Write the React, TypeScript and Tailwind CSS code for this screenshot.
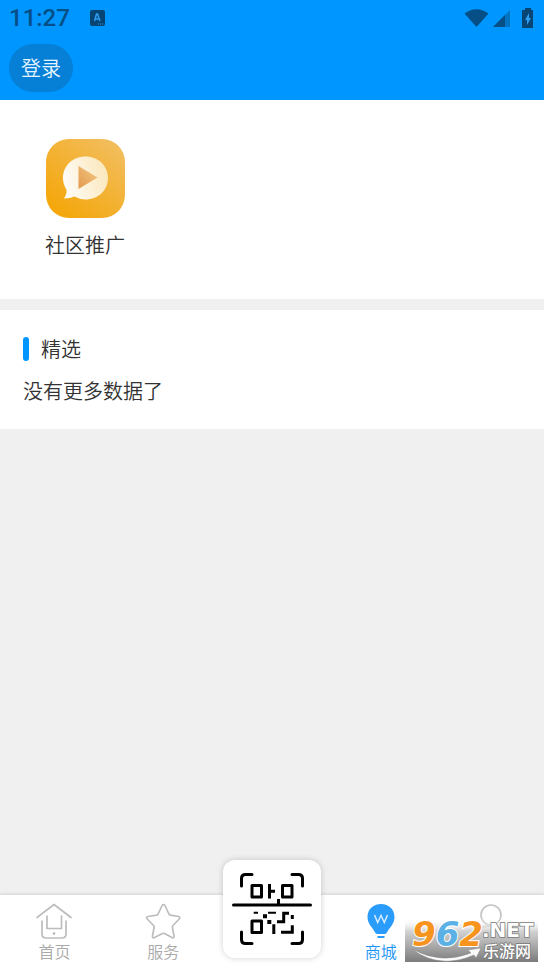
import type { ReactNode } from "react";

const TabItem = ({ label, active, children }: { label?: string; active?: boolean; children: ReactNode }) => (
  <a
    href="#"
    className={
      active
        ? "flex flex-1 flex-col items-center pt-2 text-base text-[#1c94f5]"
        : "flex flex-1 flex-col items-center pt-2 text-base text-[#a9a9a9]"
    }
  >
    {children}
    {label && <span className="leading-6">{label}</span>}
  </a>
);

const StatusBar = () => (
  <div className="flex h-9 items-center justify-between pl-[9px] pr-2 text-[#064f86]">
    <div className="flex items-center gap-5">
      <span className="font-[Roboto] text-2xl font-medium">11:27</span>
      <svg width="15" height="16" viewBox="0 0 15 16">
        <rect width="15" height="16" rx="2" fill="#064573" />
        <path d="M4.500 11 6.500 4h1l2.500 7M5.500 9h4" fill="none" stroke="#2d9df0" strokeWidth="1.500" />
        <path d="M8 14h5" stroke="#2d9df0" strokeDasharray="1 1" />
      </svg>
    </div>
    <div className="flex items-center gap-1">
      <svg width="25" height="18" viewBox="0 0 25 18">
        <path d="M0.500 4.500Q12.500 -4 24.500 4.500L12.500 18Z" fill="#064f86" />
      </svg>
      <svg width="17" height="17" viewBox="0 0 17 17">
        <path d="M17 0V17H0Z" fill="#0374c4" />
        <path d="M12 5V17H0Z" fill="#064f86" />
      </svg>
      <svg width="22" height="20" viewBox="0 0 22 20">
        <path d="M8 2h3V0h6v2h2v18H8Z" fill="#064573" />
        <path d="m15 5-4 7h2v5l4-7h-2Z" fill="#2d9df0" />
      </svg>
    </div>
  </div>
);

const PlayTile = () => (
  <svg width="79" height="79" viewBox="0 0 79 79">
    <defs>
      <linearGradient id="tile" x1="0" y1="1" x2="0.800" y2="0">
        <stop offset="0" stopColor="#f5a400" />
        <stop offset="1" stopColor="#f2bd5c" />
      </linearGradient>
      <linearGradient id="bubble" x1="0" y1="1" x2="1" y2="0.700">
        <stop offset="0" stopColor="#fff" />
        <stop offset="1" stopColor="#fbe9c0" />
      </linearGradient>
      <linearGradient id="play" x1="0" y1="1" x2="1" y2="0">
        <stop offset="0" stopColor="#e39a4c" />
        <stop offset="1" stopColor="#f3c987" />
      </linearGradient>
    </defs>
    <rect width="79" height="79" rx="23" fill="url(#tile)" />
    <path d="M39.500 17.500c13 0 22.500 9.500 22.500 21.500S52.500 60.500 39.500 60.500q-6 0-11-3-4 2-10.500 2 3-4 2.500-9-3.500-5-3.500-11.500c0-12 9.500-21.500 22.500-21.500Z" fill="url(#bubble)" />
    <path d="M32.500 27v23l19-11.500Z" fill="url(#play)" />
  </svg>
);

const HomeIcon = () => (
  <svg width="38" height="36" viewBox="0 0 38 36" fill="none" stroke="#bdbdbd" strokeWidth="1.700" strokeLinecap="round" strokeLinejoin="round">
    <path d="M2 14.500 19 1.500 36 14.500" />
    <path d="M7 18v13q0 4 4 4h16q4 0 4-4V18" />
    <path d="M12 13v12.500h14.500V13" />
    <circle cx="19" cy="30.500" r="1.200" fill="#b0b0b0" stroke="none" />
  </svg>
);

const StarIcon = () => (
  <svg width="36" height="36" viewBox="0 0 36 36" fill="none" stroke="#bdbdbd" strokeWidth="1.700" strokeLinejoin="round">
    <path d="M17.100 2.500q1.400-2 2.800 0l4 8.500q.5 1 1.600 1.200l8 1.300q2.300.5.700 2.500l-6.200 6.500q-.8.800-.6 2l1.600 8.500q.2 2.500-2 1.600L19.500 30.500q-1-.5-2 0l-8 4.100q-2.200.9-2-1.600L9.100 24.500q.2-1.200-.6-2L2.300 16q-1.600-2 .7-2.500l8.500-1.300q1.100-.2 1.600-1.200Z" />
  </svg>
);

const BulbIcon = () => (
  <svg width="28" height="36" viewBox="0 0 28 36">
    <path d="M14 1c8 0 13.500 5.500 13.500 13 0 7-5 10.500-7 14.500q-1 2.500-3 2.500h-7q-2 0-3-2.500C5.500 24.500 .5 21 .5 14 .5 6.500 6 1 14 1Z" fill="#2a9cfb" />
    <path d="M10.500 34h7" stroke="#2a9cfb" strokeWidth="2" />
    <path d="m7.500 12 3.200 7.500L14 12.500l3.300 7 3.200-7.500" fill="none" stroke="#d8eeff" strokeWidth="1.500" />
  </svg>
);

const UserIcon = () => (
  <svg width="36" height="36" viewBox="0 0 36 36" fill="none" stroke="#c6c6c6" strokeWidth="1.700">
    <circle cx="19" cy="12" r="10" />
    <path d="M2 35c1-8 8-12 16-12s15 4 16 12" />
  </svg>
);

const ScanIcon = () => (
  <svg width="80" height="72" viewBox="0 0 80 72" fill="none" stroke="#000" strokeWidth="3">
    <path
      d="M9.500 13V5.500q0-4 4-4H20M60 1.500h6.500q4 0 4 4V13M9.500 59v7.500q0 4 4 4H20M60 70.500h6.500q4 0 4-4V59"
      strokeLinecap="round"
    />
    <path d="M1.500 32h77" strokeLinecap="round" />
    <g strokeLinejoin="round">
      <rect x="20" y="12.500" width="9.500" height="11.500" />
      <rect x="50.500" y="12.500" width="9.500" height="11.500" />
      <rect x="20" y="48" width="9.500" height="11.500" />
    </g>
    <path d="M37.500 11v14.500M39 18.300h4M46.500 26v5" />
    <path d="M21.700 39.700H26M36 39.700h8" strokeWidth="2" />
    <path d="M31 43.200h4M35.300 49h4" strokeWidth="4" />
    <path d="M41.800 51.300V61M45 48.800h6.700V40.200H57M60.300 42v4M49 59.200h11.300v-7" />
  </svg>
);

const Watermark = () => (
  <svg className="absolute right-[6px] bottom-[6px]" width="133" height="50" viewBox="0 0 133 50">
    <defs>
      <linearGradient id="shade" x1="0" y1="0" x2="0" y2="1">
        <stop offset="0" stopColor="#fff" stopOpacity="0" />
        <stop offset="0.300" stopColor="#d2d2d2" />
        <stop offset="1" stopColor="#7c7c7c" />
      </linearGradient>
    </defs>
    <rect y="6" width="133" height="44" fill="url(#shade)" />
    <path d="M7 37Q36 53 66 41l-3-3 13-2-5 10-2-3Q34 58 7 37Z" fill="#fafafa" stroke="#888" strokeWidth="0.500" />
    <text
      x="7"
      y="34"
      fontFamily="DejaVu Sans, sans-serif"
      fontWeight="700"
      fontStyle="italic"
      fontSize="34"
      stroke="#fff"
      strokeWidth="2"
      paintOrder="stroke"
    >
      <tspan fill="#f7941e">9</tspan>
      <tspan fill="#5bb0e6">6</tspan>
      <tspan fill="#f7941e">2</tspan>
    </text>
    <g fill="#fff" stroke="#777" strokeWidth="1.500" paintOrder="stroke">
      <text x="77" y="25" fontFamily="DejaVu Sans, sans-serif" fontWeight="700" fontSize="20">.NET</text>
      <text x="78" y="45" fontFamily="Noto Sans CJK SC, sans-serif" fontWeight="500" fontSize="16">乐游网</text>
    </g>
  </svg>
);

const App = () => {
  return (
    <div className="flex min-h-screen flex-col bg-[#f0f0f0] font-['Noto_Sans_CJK_SC',sans-serif] font-[350] text-[#333]">
      <header className="bg-[#0096ff]">
        <StatusBar />
        <div className="px-[9px] py-2">
          <button className="h-12 w-16 rounded-full bg-[#067fd6] text-xl text-[#e6f4ff]">登录</button>
        </div>
      </header>
      <section className="bg-white px-[33px] pt-[39px] pb-10">
        <a href="#" className="flex w-fit flex-col items-center gap-[13px] px-3">
          <PlayTile />
          <span className="text-xl">社区推广</span>
        </a>
      </section>
      <section className="mt-[11px] bg-white px-[23px] pt-[25px] pb-6 text-xl">
        <h2 className="flex items-center gap-3">
          <span className="h-6 w-[6px] rounded-full bg-[#0096ff]" />
          精选
        </h2>
        <p className="mt-[14px]">没有更多数据了</p>
      </section>
      <nav className="relative mt-auto flex h-[73px] bg-white shadow-[0_-1px_3px_rgba(0,0,0,0.12)]">
        <TabItem label="首页"><HomeIcon /></TabItem>
        <TabItem label="服务"><StarIcon /></TabItem>
        <div className="flex flex-1 justify-center">
          <button
            aria-label="扫码"
            className="-mt-[35px] flex h-[98px] w-[98px] shrink-0 items-center justify-center rounded-xl bg-white shadow-[0_0_6px_rgba(0,0,0,0.18)]"
          >
            <ScanIcon />
          </button>
        </div>
        <TabItem label="商城" active><BulbIcon /></TabItem>
        <TabItem><UserIcon /></TabItem>
        <Watermark />
      </nav>
    </div>
  );
};

export default App;
